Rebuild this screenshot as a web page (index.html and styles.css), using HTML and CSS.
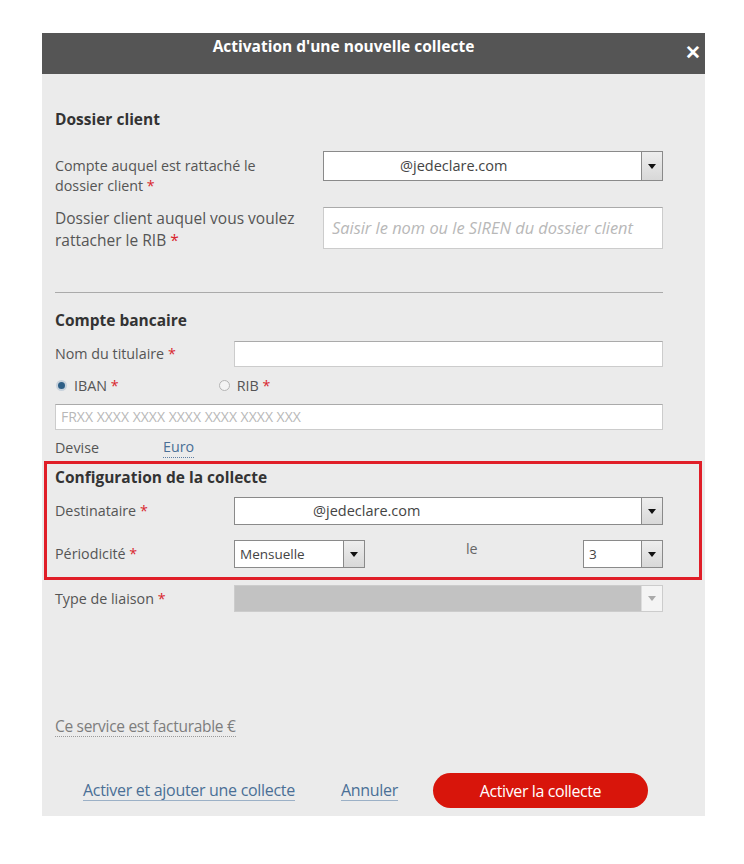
FILE: index.html
```html
<!DOCTYPE html>
<html lang="fr">
<head>
    <meta charset="UTF-8">
    <meta name="viewport" content="width=device-width, initial-scale=1.0">
    <title>Activation d'une nouvelle collecte</title>
    <link rel="stylesheet" href="styles.css">
</head>
<body>

    <div class="modal">
        <div class="modal-header">
            <span class="modal-title">Activation d'une nouvelle collecte</span>
            <span class="modal-close">&#x2715;</span>
        </div>

        <div class="modal-body">
            <!-- Dossier client -->
            <h3 class="section-title first">Dossier client</h3>

            <div class="row row-compte">
                <label class="lbl lbl-wide">Compte auquel est rattaché le<br>dossier client <span class="req">*</span></label>
                <div class="select select-wide">
                    <span class="select-value value-mail">@jedeclare.com</span>
                    <span class="select-arrow"><i></i></span>
                </div>
            </div>

            <div class="row row-dossier">
                <label class="lbl lbl-wide">Dossier client auquel vous voulez<br>rattacher le RIB <span class="req">*</span></label>
                <div class="input input-tall placeholder italic">Saisir le nom ou le SIREN du dossier client</div>
            </div>

            <hr class="sep">

            <!-- Compte bancaire -->
            <h3 class="section-title">Compte bancaire</h3>

            <div class="row row-titulaire">
                <label class="lbl">Nom du titulaire <span class="req">*</span></label>
                <div class="input"></div>
            </div>

            <div class="radios">
                <span class="radio checked"></span><span class="radio-lbl">IBAN <span class="req">*</span></span>
                <span class="radio radio-rib"></span><span class="radio-lbl">RIB <span class="req">*</span></span>
            </div>

            <div class="input input-full placeholder">FRXX XXXX XXXX XXXX XXXX XXXX XXX</div>

            <div class="devise">
                <span class="devise-lbl">Devise</span>
                <a class="link dotted">Euro</a>
            </div>

            <!-- Configuration de la collecte -->
            <div class="highlight">
                <h3 class="section-title config">Configuration de la collecte</h3>

                <div class="row row-dest">
                    <label class="lbl">Destinataire <span class="req">*</span></label>
                    <div class="select">
                        <span class="select-value value-dest">@jedeclare.com</span>
                        <span class="select-arrow"><i></i></span>
                    </div>
                </div>

                <div class="row row-period">
                    <label class="lbl">Périodicité <span class="req">*</span></label>
                    <div class="select select-small">
                        <span class="select-value">Mensuelle</span>
                        <span class="select-arrow"><i></i></span>
                    </div>
                    <span class="le">le</span>
                    <div class="select select-day">
                        <span class="select-value">3</span>
                        <span class="select-arrow"><i></i></span>
                    </div>
                </div>
            </div>

            <div class="row row-type">
                <label class="lbl">Type de liaison <span class="req">*</span></label>
                <div class="select disabled">
                    <span class="select-value"></span>
                    <span class="select-arrow"><i></i></span>
                </div>
            </div>

            <p class="facturable">Ce service est facturable €</p>

            <div class="actions">
                <a class="link solid">Activer et ajouter une collecte</a>
                <a class="link solid">Annuler</a>
                <button class="btn-primary">Activer la collecte</button>
            </div>
        </div>
    </div>

</body>
</html>
```

FILE: styles.css
```css
body { margin: 0; background: #fff; font-family: "Open Sans", "Liberation Sans", sans-serif; font-size: 14.3px; color: #555; }

.modal { width: 663px; margin: 33px 0 0 42px; background: #ebebeb; }
.modal-header { position: relative; height: 41px; padding-right: 60px; background: #555; color: #fff; text-align: center; }
.modal-title { display: inline-block; margin-top: 2px; font-size: 15.5px; font-weight: bold; line-height: 22px; }
.modal-close { position: absolute; right: 4px; top: 8px; font-size: 19px; font-weight: bold; line-height: 22px; }

.modal-body { padding: 0 42px 8px 13px; }

.section-title { margin: 0; font-size: 15.5px; font-weight: bold; color: #333; line-height: 20px; }
.section-title.first { padding-top: 35px; }

.row { display: flex; align-items: flex-start; }
.lbl { display: block; width: 179px; flex: none; line-height: 20px; white-space: nowrap; }
.lbl-wide { width: 268px; }
.req { color: #d9262e; }

.row-compte { margin-top: 22px; }
.row-compte .lbl { padding-top: 5px; }
.row-dossier { margin-top: 11px; }
.row-dossier .lbl { line-height: 22px; font-size: 15.5px; }

.input { flex: 1; height: 26px; box-sizing: border-box; background: #fff; border: 1px solid #ccc; border-top-color: #aaa; }
.input-tall { height: 42px; line-height: 40px; padding-left: 8px; }
.input-full { margin-top: 9px; line-height: 24px; padding-left: 5px; }
.placeholder { color: #b8b8b8; font-size: 14px; white-space: nowrap; overflow: hidden; }
.italic { font-style: italic; font-size: 16.4px; }

.select { flex: 1; display: flex; height: 28px; box-sizing: border-box; background: #fff; border: 1px solid #8a8a8a; }
.select-wide { height: 30px; }
.select-value { flex: 1; padding-left: 5px; line-height: 26px; color: #444; font-size: 13.5px; white-space: nowrap; }
.select-wide .select-value { line-height: 28px; }
.value-mail, .value-dest { font-size: 14.5px; }
.value-mail { padding-left: 76px; }
.value-dest { padding-left: 78px; }
.select-arrow { width: 20px; flex: none; display: flex; align-items: center; justify-content: center; background: linear-gradient(#eee, #d8d8d8); border-left: 1px solid #8a8a8a; }
.select-arrow i { width: 0; height: 0; border-left: 4px solid transparent; border-right: 4px solid transparent; border-top: 5px solid #111; }
.select-small { flex: none; width: 131px; }
.select-day { flex: none; width: 80px; }
.le { width: 218px; flex: none; padding-left: 101px; box-sizing: border-box; line-height: 18px; color: #666; }

.sep { margin: 41px 0 0; border: none; border-top: 1px solid #aaa; }
.sep + .section-title { margin-top: 17px; }

.row-titulaire { margin-top: 11px; }
.row-titulaire .lbl { line-height: 26px; }

.radios { display: flex; align-items: center; height: 20px; margin-top: 8px; padding-left: 1px; }
.radio { width: 11px; height: 11px; box-sizing: border-box; border-radius: 50%; border: 1px solid #b5b5b5; background: #f4f4f4; }
.radio.checked { border: 2px solid #c8d2dc; background: #2e5f86; }
.radio-lbl { margin-left: 7px; color: #555; }
.radio-rib { margin-left: 100px; }

.devise { display: flex; margin-top: 8px; line-height: 20px; }
.devise-lbl { width: 108px; }

.link { color: #4a6f96; text-decoration: none; cursor: pointer; }
.link.dotted { border-bottom: 1px dotted #5e7fa3; line-height: 18px; }
.link.solid { border-bottom: 1px solid #9bb0c6; }

.highlight { margin: 3px -39px 0 -11px; padding: 3px 36px 9px 8px; border: 3px solid #e01e28; }
.row-dest { margin-top: 10px; }
.row-dest .lbl, .row-period .lbl, .row-type .lbl { line-height: 28px; }
.row-period { margin-top: 15px; }

.row-type { margin-top: 5px; }
.select.disabled { height: 27px; background: #c2c2c2; border-color: #ccc; }
.select.disabled .select-arrow { background: #f4f4f4; border-left-color: #ddd; }
.select.disabled .select-arrow i { border-top-color: #aaa; }

.facturable { display: inline-block; margin: 103px 0 0; color: #7d7d7d; font-size: 15.5px; line-height: 20px; border-bottom: 1px dotted #999; letter-spacing: -0.3px; }

.actions { display: flex; align-items: center; margin-top: 36px; padding-left: 28px; }
.actions .link { font-size: 16px; line-height: 20px; letter-spacing: -0.3px; }
.actions .link + .link { margin-left: 46px; }
.btn-primary { margin-left: 35px; width: 215px; height: 35px; border: none; border-radius: 18px; background: #d8150b; color: #fff; font-family: inherit; font-size: 16px; letter-spacing: -0.4px; cursor: pointer; }
```
